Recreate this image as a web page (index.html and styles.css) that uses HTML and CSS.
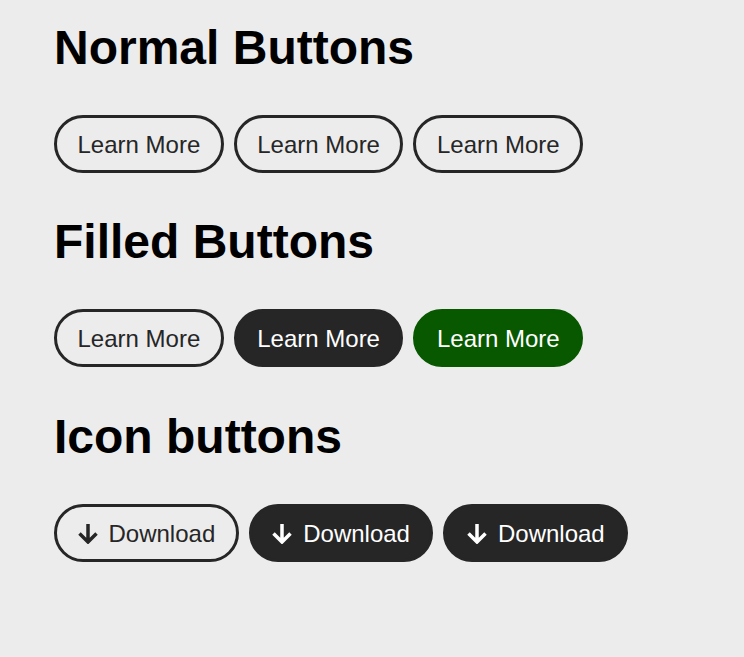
FILE: index.html
```html
<!DOCTYPE html>
<html lang="en">
<head>
<meta charset="utf-8">
<title>Buttons</title>
<link rel="stylesheet" href="styles.css">
</head>
<body>
<main class="page">
  <section class="section">
    <h2 class="title">Normal Buttons</h2>
    <div class="row">
      <button class="btn">Learn More</button>
      <button class="btn">Learn More</button>
      <button class="btn">Learn More</button>
    </div>
  </section>
  <section class="section">
    <h2 class="title">Filled Buttons</h2>
    <div class="row">
      <button class="btn">Learn More</button>
      <button class="btn btn-dark">Learn More</button>
      <button class="btn btn-green">Learn More</button>
    </div>
  </section>
  <section class="section section-last">
    <h2 class="title">Icon buttons</h2>
    <div class="row">
      <button class="btn btn-icon"><svg class="icon" width="20" height="21" viewBox="0 0 20 21" aria-hidden="true"><path d="M10 1V19M1.5 10.5L10 19L18.5 10.5" /></svg>Download</button>
      <button class="btn btn-icon btn-dark"><svg class="icon" width="20" height="21" viewBox="0 0 20 21" aria-hidden="true"><path d="M10 1V19M1.5 10.5L10 19L18.5 10.5" /></svg>Download</button>
      <button class="btn btn-icon btn-dark"><svg class="icon" width="20" height="21" viewBox="0 0 20 21" aria-hidden="true"><path d="M10 1V19M1.5 10.5L10 19L18.5 10.5" /></svg>Download</button>
    </div>
  </section>
</main>
</body>
</html>
```

FILE: styles.css
```css
html, body {
  margin: 0;
  padding: 0;
  background: #ececec;
}

body {
  font-family: "Liberation Sans", Arial, Helvetica, sans-serif;
  color: #000;
}

.page {
  padding: 20px 0 0 54px;
}

.section {
  margin-bottom: 41px;
}

.section-last {
  padding-top: 1px;
}

.title {
  margin: 0 0 39px 0;
  font-size: 48px;
  line-height: 56px;
  font-weight: 700;
  color: #000;
}

.row {
  display: flex;
  gap: 10px;
}

.btn {
  display: inline-flex;
  align-items: center;
  box-sizing: border-box;
  height: 58px;
  padding: 13px 20.5px 11px;
  border: 3px solid #262626;
  border-radius: 29px;
  background: transparent;
  color: #262626;
  font-family: "Liberation Sans", Arial, Helvetica, sans-serif;
  font-size: 24px;
  line-height: 28px;
  cursor: pointer;
}

.btn-dark {
  background: #262626;
  border-color: #262626;
  color: #fff;
}

.btn-green {
  background: #085800;
  border-color: #085800;
  color: #fff;
}

.btn-icon {
  gap: 11px;
}

.icon {
  flex: none;
  display: block;
  width: 20px;
  height: 21px;
  margin-top: -2px;
  fill: none;
  stroke: currentColor;
  stroke-width: 3.5;
  stroke-linecap: butt;
  stroke-linejoin: miter;
}
```
